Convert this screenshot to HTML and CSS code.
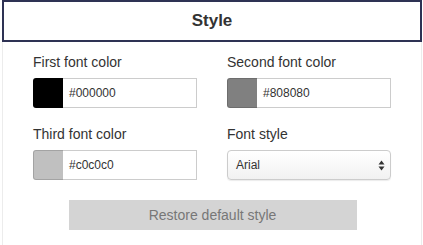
FILE: index.html
```html
<!DOCTYPE html>
<html lang="en">
<head>
    <meta charset="UTF-8">
    <meta name="viewport" content="width=device-width, initial-scale=1.0">
    <title>Style</title>
    <link rel="stylesheet" href="styles.css">
</head>
<body>
    <div class="panel">
        <div class="panel-header">Style</div>

        <div class="style-grid">
            <div class="form-group">
                <label>First font color</label>
                <div class="color-input">
                    <span class="swatch swatch-black"></span>
                    <span class="color-value">#000000</span>
                </div>
            </div>

            <div class="form-group">
                <label>Second font color</label>
                <div class="color-input">
                    <span class="swatch swatch-gray"></span>
                    <span class="color-value">#808080</span>
                </div>
            </div>

            <div class="form-group">
                <label>Third font color</label>
                <div class="color-input">
                    <span class="swatch swatch-silver"></span>
                    <span class="color-value">#c0c0c0</span>
                </div>
            </div>

            <div class="form-group">
                <label>Font style</label>
                <div class="select-box">
                    <span>Arial</span>
                    <svg class="select-arrows" width="7" height="11" viewBox="0 0 7 11">
                        <path d="M3.5 0.5 L6.5 4.5 L0.5 4.5 Z" fill="#333"/>
                        <path d="M3.5 10.5 L6.5 6.5 L0.5 6.5 Z" fill="#333"/>
                    </svg>
                </div>
            </div>
        </div>

        <div class="button-row">
            <button class="restore-button">Restore default style</button>
        </div>
    </div>
</body>
</html>
```

FILE: styles.css
```css
* {
    margin: 0;
    padding: 0;
    box-sizing: border-box;
}

body {
    font-family: "Liberation Sans", Arial, sans-serif;
    background: white;
    color: #333;
}

.panel {
    margin-left: 2px;
    width: 420px;
    height: 245px;
    border-left: 1px solid #ececec;
    border-right: 1px solid #ececec;
}

.panel-header {
    height: 42px;
    margin-left: -1px;
    margin-right: -1px;
    border: 2px solid #2e3254;
    display: flex;
    align-items: center;
    justify-content: center;
    font-size: 17px;
    font-weight: bold;
    color: #333;
}

.style-grid {
    display: grid;
    grid-template-columns: 164px 164px;
    column-gap: 30px;
    row-gap: 16px;
    padding: 10px 0 0 30px;
}

.form-group label {
    display: block;
    height: 20px;
    line-height: 20px;
    font-size: 14px;
    color: #333;
    margin-bottom: 6px;
}

.color-input {
    display: flex;
    height: 30px;
}

.swatch {
    width: 30px;
    border-radius: 3px 0 0 3px;
    border: 1px solid rgba(0, 0, 0, 0.15);
    border-right: none;
}

.swatch-black {
    background: #000000;
}

.swatch-gray {
    background: #808080;
}

.swatch-silver {
    background: #c0c0c0;
}

.color-value {
    flex: 1;
    display: flex;
    align-items: center;
    padding-left: 6px;
    border: 1px solid #ccc;
    border-left: none;
    font-size: 12px;
    color: #333;
}

.select-box {
    height: 30px;
    display: flex;
    align-items: center;
    justify-content: space-between;
    padding: 0 5px 0 8px;
    border: 1px solid #ccc;
    border-radius: 4px;
    background: linear-gradient(#ffffff, #f1f1f1);
    box-shadow: 0 1px 1px rgba(0, 0, 0, 0.08);
    font-size: 12px;
    color: #333;
}

.button-row {
    display: flex;
    justify-content: center;
    margin-top: 20px;
}

.restore-button {
    width: 288px;
    height: 30px;
    margin-left: 1px;
    background: #d4d4d4;
    border: none;
    font-family: "Liberation Sans", Arial, sans-serif;
    font-size: 14px;
    color: #777;
}
```
